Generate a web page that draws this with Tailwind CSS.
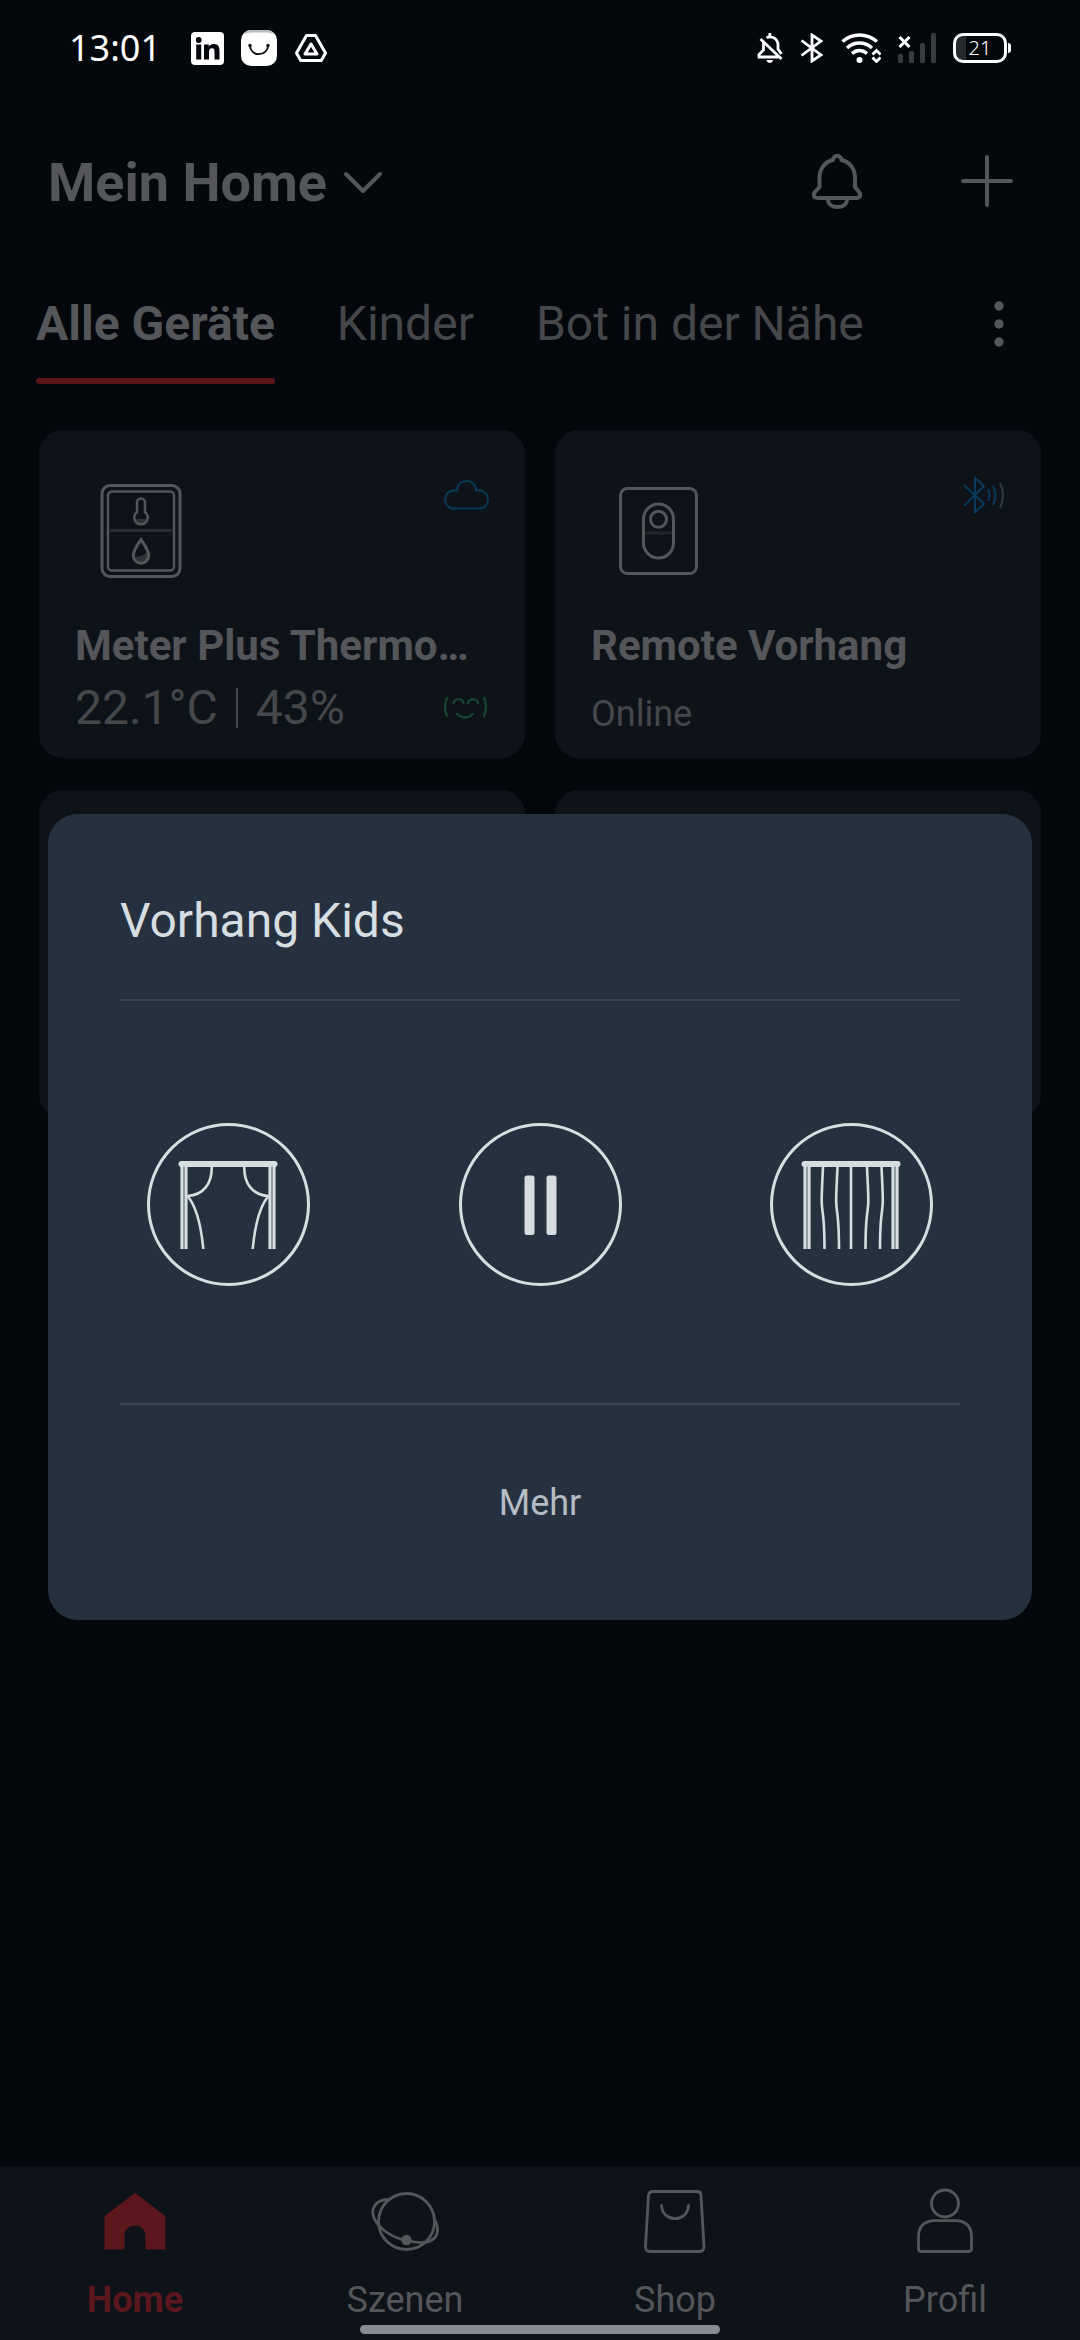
<!DOCTYPE html>
<html lang="de">
<head>
<meta charset="utf-8">
<meta name="viewport" content="width=device-width, initial-scale=1">
<title>Mein Home</title>
<script src="https://cdn.jsdelivr.net/npm/@tailwindcss/browser@4"></script>
</head>
<body class="flex min-h-screen flex-col bg-[#04070c] font-[Roboto,sans-serif] text-[#54565a]">

<!-- Status bar -->
<div class="flex h-24 items-center justify-between px-[69px] text-white">
  <div class="flex items-center">
    <span class="mr-[30px] font-['Noto_Sans',sans-serif] text-[36px] leading-[48px]">13:01</span>
    <svg class="mr-[17px] h-[33px] w-[33px]" viewBox="0 0 33 33" aria-label="LinkedIn">
      <rect width="33" height="33" rx="4" fill="#fff"/>
      <g fill="#04070c"><circle cx="7.700" cy="8" r="2.900"/><rect x="5.200" y="12.500" width="5" height="15"/><path d="M13 12.500h4.800v2.100c.8-1.400 2.600-2.500 5-2.500 4.700 0 5.700 3.100 5.700 7.200v8.200h-5v-7.300c0-1.900-.1-3.900-2.500-3.900s-3 1.900-3 3.800v7.400h-5z"/></g>
    </svg>
    <svg class="mr-[18px] h-9 w-9" viewBox="0 0 36 36" aria-hidden="true">
      <rect width="36" height="36" rx="10" fill="#fff"/>
      <path d="M3 4Q6 0 10 0h16q4 0 7 4Q30 2.500 26 2.500H10Q6 2.500 3 4z" fill="#bbb"/>
      <path d="M9 15.500c0 5 3.800 8.700 9 8.700s9-3.700 9-8.700" fill="none" stroke="#04070c" stroke-width="1.800"/>
      <circle cx="9" cy="15.500" r="1.700" fill="#04070c"/><circle cx="27" cy="15.500" r="1.700" fill="#04070c"/>
    </svg>
    <svg class="h-7 w-8" viewBox="0 0 32 28" fill="none" stroke="#fff" stroke-width="3" stroke-linejoin="round" aria-hidden="true">
      <path d="M11.500 1.500h9l10 17.500-4.200 7.500H5.700L1.500 19z"/><path d="M16 10l6 10H10z"/>
    </svg>
  </div>
  <div class="flex items-center gap-[17px]">
    <svg class="h-[30px] w-[26px]" viewBox="0 0 26 30" fill="none" stroke="#fff" stroke-width="2.800" aria-label="Stumm">
      <path d="M6.500 8.500V17L2 21.500V24h19.500M3.500 6l21 20M9.500 4.800C15 2 21 6 21 12v4l3.500 5M12.800 0v5"/>
      <path d="M9.500 27h6.500c-.5 2-1.500 2.800-3.200 2.800S10 29 9.500 27z" fill="#fff" stroke="none"/>
    </svg>
    <svg class="h-[30px] w-6" viewBox="0 0 24 30" fill="none" stroke="#fff" stroke-width="2.800" aria-label="Bluetooth">
      <path d="M1.500 7.500L21 22l-9 6V2l9 6L1.500 22.500"/>
    </svg>
    <svg class="h-[30px] w-10" viewBox="0 0 40 30" fill="none" stroke="#fff" stroke-width="3.500" aria-label="WLAN">
      <path d="M1.500 8.500Q9 2 18.500 2T36 8.500M6 15q5.500-5 12.500-5T31 15M11 20.500q3.500-3 7.500-3t7.500 3"/>
      <circle cx="18.500" cy="27" r="3" fill="#fff" stroke="none"/>
      <path d="M31.500 21.500l4-4 4 4M31.500 24.500l4 4 4-4" stroke-width="2.800"/>
    </svg>
    <svg class="h-[30px] w-[38px]" viewBox="0 0 38 30" aria-label="Kein Signal">
      <path d="M1.500 4l10 10M11.500 4l-10 10" stroke="#fff" stroke-width="3"/>
      <g fill="#393b40"><rect y="21" width="5" height="9" rx="1.500"/><rect x="11" y="18" width="5" height="12" rx="1.500"/><rect x="22" y="10" width="5" height="20" rx="1.500"/><rect x="33" width="5" height="30" rx="1.500"/></g>
    </svg>
    <div class="flex items-center gap-px">
      <div class="h-[30px] w-[54px] rounded-[10px] border-[3px] border-white bg-linear-to-r from-[#26292d] from-20% to-transparent to-20% text-center font-['Noto_Sans',sans-serif] text-[20px] leading-6 font-light">21</div>
      <div class="h-2.5 w-[3px] rounded-r bg-white"></div>
    </div>
  </div>
</div>

<!-- Header -->
<header class="mt-10 flex h-[90px] items-center justify-between px-12">
  <button class="flex items-center gap-4 pt-1">
    <h1 class="text-[54px] leading-[64px] font-bold">Mein Home</h1>
    <svg class="h-6 w-10" viewBox="0 0 40 24" fill="none" stroke="currentColor" stroke-width="4" stroke-linecap="round" stroke-linejoin="round" aria-hidden="true"><path d="M3 3l17 17L37 3"/></svg>
  </button>
  <div class="flex gap-[60px]">
    <button class="flex size-[90px] items-center justify-center" aria-label="Mitteilungen">
      <svg class="h-14 w-[50px]" viewBox="0 0 50 56" fill="none" stroke="currentColor" stroke-width="4" stroke-linejoin="round" aria-hidden="true">
        <path d="M21 7a4.200 4.200 0 0 1 8.400 0C38 9 43 16 43 25v9l4 5c3 4 0 6-3 6H6c-3 0-6-2-3-6l4.500-5v-9C7.500 16 12.500 9 21 7zM16 46c0 5 4 8 9.500 8s9.500-3 9.500-8"/>
      </svg>
    </button>
    <button class="flex size-[90px] items-center justify-center" aria-label="Hinzufügen">
      <svg class="size-[52px]" viewBox="0 0 52 52" fill="none" stroke="currentColor" stroke-width="4" stroke-linecap="round" aria-hidden="true"><path d="M26 2v48M2 26h48"/></svg>
    </button>
  </div>
</header>

<!-- Room tabs -->
<nav class="mt-[68px] flex items-start justify-between pr-12 pl-9" aria-label="Räume">
  <div class="flex gap-[62px] text-[48px] leading-[60px] whitespace-nowrap text-[#45474b]">
    <a href="#alle" class="flex flex-col gap-6 font-bold text-[#54565a]">Alle Geräte<span class="h-1.5 rounded-full bg-[#5b171b]"></span></a>
    <a href="#kinder">Kinder</a>
    <a href="#bot">Bot in der Nähe</a>
  </div>
  <button class="flex h-[60px] w-[66px] items-center justify-center" aria-label="Weitere Optionen">
    <svg class="h-[46px] w-2.5" viewBox="0 0 10 46" fill="currentColor" aria-hidden="true"><circle cx="5" cy="5" r="4.700"/><circle cx="5" cy="23" r="4.700"/><circle cx="5" cy="41" r="4.700"/></svg>
  </button>
</nav>

<!-- Devices -->
<main class="mt-[46px] grid grid-cols-2 gap-x-[30px] gap-y-8 px-[39px] pb-12">
  <article class="rounded-3xl bg-[#0e131a] px-9 pt-9 pb-[26px]">
    <div class="flex items-start justify-between">
      <svg class="size-[132px]" viewBox="0 0 132 132" fill="none" stroke="currentColor" stroke-width="3" aria-hidden="true">
        <rect x="27" y="19.500" width="78" height="91" rx="8"/><rect x="33" y="25.500" width="66" height="79" rx="4" stroke-width="2.500"/>
        <path d="M35 64.500h62" stroke="#292d32"/>
        <path d="M59.500 53h13a6.500 6.500 0 0 1-13 0zM59 91q7 0 14-5v5a7 7 0 0 1-14 0z" fill="#303338" stroke="none"/>
        <path d="M62 46v-9.500a4 4 0 0 1 8 0V46a6.800 6.800 0 1 1-8 0z" stroke-width="2.500"/>
        <path d="M66 73.500c-4 6-7.700 11-7.700 16a7.700 7.700 0 0 0 15.400 0c0-5-3.700-10-7.700-16z"/>
      </svg>
      <svg class="mt-3.5 h-[30px] w-[45px]" viewBox="0 0 45 30" fill="none" stroke="#083a55" stroke-width="2" aria-label="Cloud">
        <path d="M9.500 28.500C4 28.500 1 24 1 19.500 1 14 6 9.500 13 10.500 13 4.500 17 1 22.500 1S32 5 32 10.500c7-1 12 3.500 12 9 0 4.500-3 9-8.500 9z"/>
      </svg>
    </div>
    <h2 class="mt-6 text-[42px] leading-[48px] font-bold whitespace-nowrap">Meter Plus Thermo…</h2>
    <div class="mt-3.5 flex h-12 items-center justify-between text-[#45474b]">
      <p class="flex items-center gap-[18px] text-[48px] leading-[48px]"><span>22.1°C</span><span class="h-10 w-0.5 bg-[#45474b]"></span><span>43%</span></p>
      <svg class="h-6 w-[46px]" viewBox="0 0 46 24" fill="none" stroke="#164531" stroke-width="2.200" stroke-linecap="round" aria-label="Angenehm">
        <path d="M4 2Q0 11 4 20M41 2q4 9 0 18M10.500 7c1-5 9-5 10 0M25 7c1-5 9-5 10 0M14 18q8 7 16 0"/>
      </svg>
    </div>
  </article>
  <article class="rounded-3xl bg-[#0e131a] px-9 pt-9 pb-[26px]">
    <div class="flex items-start justify-between">
      <svg class="size-[132px]" viewBox="0 0 132 132" fill="none" stroke="currentColor" stroke-width="3" aria-hidden="true">
        <rect x="29.500" y="22.500" width="76" height="85" rx="7"/><path d="M54 67h27" stroke="#22262b"/>
        <rect x="52.500" y="38" width="30" height="54" rx="15"/><circle cx="67.500" cy="53.300" r="8"/>
      </svg>
      <svg class="mt-2.5 h-[38px] w-[42px]" viewBox="0 0 42 38" fill="none" stroke="#083a5c" stroke-width="2" aria-label="Bluetooth">
        <path d="M1 9l20 19-9 8V2l9 8L1 30"/><path d="M25 13q3 6 0 12M30 10q5 9 0 19"/><path d="M37 7q6 12 0 25" stroke="#2d3a44"/>
      </svg>
    </div>
    <h2 class="mt-6 text-[42px] leading-[48px] font-bold whitespace-nowrap">Remote Vorhang</h2>
    <div class="mt-3.5 flex h-12 items-end text-[#45474b]"><p class="text-[36px] leading-9">Online</p></div>
  </article>
  <article class="h-[328px] rounded-3xl bg-[#0e131a]"></article>
  <article class="h-[328px] rounded-3xl bg-[#0e131a]"></article>
</main>

<!-- Bottom navigation -->
<nav class="relative mt-auto grid grid-cols-4 bg-[#0e131a] pt-[19px] pb-4 text-[36px] leading-[48px]" aria-label="Hauptmenü">
  <a href="#home" class="flex flex-col items-center gap-[19px] font-bold text-[#5b171b]">
    <svg class="size-[72px]" viewBox="0 0 72 72" fill="currentColor" aria-hidden="true"><path d="M34.500 9q1.500-1.300 3 0L65.500 30.500q1 .8 1 2v31q0 1-1 1H48q-1.500 0-1.500-1.500V51c0-14-21-14-21 0v12q0 1.500-1.500 1.500H6.500q-1 0-1-1v-31q0-1.200 1-2z"/></svg>
    Home
  </a>
  <a href="#szenen" class="flex flex-col items-center gap-[19px]">
    <svg class="size-[72px]" viewBox="0 0 72 72" fill="none" stroke="currentColor" stroke-width="2.800" aria-hidden="true">
      <circle cx="37.500" cy="36.500" r="28"/><path d="M19 14.500C6 15 0 24 6.500 36 13 46 25 53 37.500 55.500c12 3 23 3 28-2.500 4-4 4-12 0-19"/><circle cx="37.500" cy="55" r="5.200" fill="currentColor" stroke="none"/>
    </svg>
    Szenen
  </a>
  <a href="#shop" class="flex flex-col items-center gap-[19px]">
    <svg class="size-[72px]" viewBox="0 0 72 72" fill="none" stroke="currentColor" stroke-width="2.800" stroke-linecap="round" aria-hidden="true">
      <path d="M14 6.500h44q4 0 4 4l3 51q0 5-4.500 5H11q-4.500 0-4.500-5l3-51q.5-4 4.500-4zM22.500 20.500c1 17.500 26 17.500 27 0"/>
    </svg>
    Shop
  </a>
  <a href="#profil" class="flex flex-col items-center gap-[19px]">
    <svg class="size-[72px]" viewBox="0 0 72 72" fill="none" stroke="currentColor" stroke-width="2.800" aria-hidden="true">
      <circle cx="36" cy="18.500" r="13.500"/><path d="M24 35.700h24Q62.500 37 62.500 52v11.500q0 3-3 3h-47q-3 0-3-3V52Q9.500 37 24 35.700z"/>
    </svg>
    Profil
  </a>
  <div class="absolute bottom-1.5 left-1/3 h-[9px] w-1/3 rounded-full bg-[#888b90]"></div>
</nav>

<!-- Curtain control dialog -->
<div class="fixed inset-x-0 top-[94px] bottom-0 flex items-center px-12">
  <section role="dialog" aria-labelledby="dialog-title" class="w-full rounded-[30px] bg-[#263140] px-[72px] text-[#d6dee2]">
    <h2 id="dialog-title" class="border-b-2 border-[#394454] pt-[77px] pb-12 text-[48px] leading-[60px]">Vorhang Kids</h2>
    <div class="flex justify-between border-b-2 border-[#394454] px-[27px] pt-[122px] pb-[117px]">
      <button class="size-[163px] rounded-full border-[3px] border-current" aria-label="Öffnen">
        <svg class="size-full" viewBox="3 3 157 157" fill="none" stroke="currentColor" stroke-width="2.600" aria-hidden="true">
          <rect x="31.500" y="38" width="99" height="6" rx="3" fill="currentColor" stroke="none"/>
          <path d="M35 43v83M39 43v83M123 43v83M127 43v83" stroke-width="3.200"/><path d="M37 43v83M125 43v83" stroke="#9aa4ab" stroke-width="1"/>
          <path d="M64.700 44C65 60 57 72 40.500 73 50 84 54 102 56.300 126M97.300 44c-.3 16 7.700 28 24.200 29-9.500 11-13.500 29-15.800 53"/>
        </svg>
      </button>
      <button class="size-[163px] rounded-full border-[3px] border-current" aria-label="Pause">
        <svg class="size-full" viewBox="3 3 157 157" fill="currentColor" aria-hidden="true"><rect x="65.500" y="52.500" width="10" height="59.500" rx="2.500"/><rect x="87.500" y="52.500" width="10" height="59.500" rx="2.500"/></svg>
      </button>
      <button class="size-[163px] rounded-full border-[3px] border-current" aria-label="Schließen">
        <svg class="size-full" viewBox="3 3 157 157" fill="none" stroke="currentColor" stroke-width="2.600" aria-hidden="true">
          <rect x="31.500" y="38" width="99" height="6" rx="3" fill="currentColor" stroke="none"/>
          <path d="M35 43v83M39 43v83M123 43v83M127 43v83" stroke-width="3.200"/><path d="M37 43v83M125 43v83" stroke="#9aa4ab" stroke-width="1"/>
          <path d="M81 44v82M53 44C51 84 51.500 80 53 92q1.500 13 1.500 34M67.500 44c-2 40-1.500 36 0 48q1.500 13 1.500 34M97 44c2 40 1.500 36 0 48q-1.500 13-1.500 34M111.500 44c2 40 1.500 36 0 48q-1.500 13-1.500 34"/>
        </svg>
      </button>
    </div>
    <button class="block w-full pt-[74px] pb-[93px] text-[36px] leading-[48px] text-[#b4bcc4]">Mehr</button>
  </section>
</div>

</body>
</html>
